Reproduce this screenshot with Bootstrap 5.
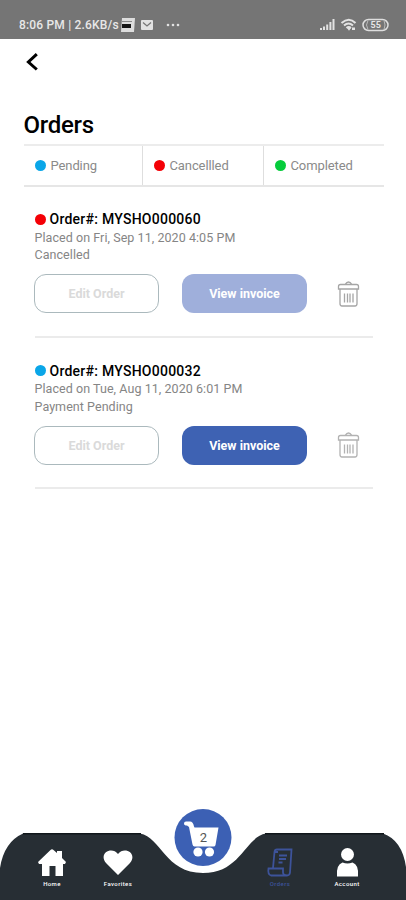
<!DOCTYPE html>
<html lang="en">
<head>
<meta charset="utf-8">
<meta name="viewport" content="width=device-width, initial-scale=1">
<title>Orders</title>
<link href="https://cdn.jsdelivr.net/npm/bootstrap@5.3.0/dist/css/bootstrap.min.css" rel="stylesheet">
<style>
body{font-family:Roboto,"Liberation Sans",sans-serif;background:#fff;color:#000;height:900px;overflow:hidden}
svg{display:block;flex:none}
.status-bar{height:39px;background:#757575;color:#e8e8e8;padding:11px 17px 0 19px;font-size:12px;font-weight:500;line-height:28px}
.status-bar>div{height:28px}
.status-text{width:101px;white-space:nowrap;letter-spacing:.18px}
.back-link{margin:14px 0 0 25px;width:14px}
.page-title{font-size:24px;font-weight:500;line-height:28px;margin:40px 0 5px;letter-spacing:-.3px}
.orders-page{padding:0 22px 0 23.5px}
.filters{border-top:2px solid #ececec;border-bottom:2px solid #e6e6e6;height:43px}
.filters>div{font-size:13px;color:#8a8a8a;padding-left:11px;width:121px;gap:5px;letter-spacing:-.1px}
.filters>div:first-child{width:118px;letter-spacing:-.1px}
.filters>div+div{border-left:1px solid #dedede}
.dot{width:11px;height:11px;border-radius:50%;flex:none}
.blue{background:#0aa6e8}.red{background:#f40006}.green{background:#06cc3c}
.order{margin:0 11px;height:151.5px;border-bottom:2px solid #ebebeb;padding-top:25px}
.filters+.order{height:150.5px;padding-top:24px}
.order-no{font-size:14px;font-weight:500;line-height:16px;gap:4px;letter-spacing:.25px}
.order-info{font-size:12.5px;line-height:17.5px;color:#858585;margin-top:1.5px;letter-spacing:.06px}
.order-actions{margin-top:10.5px;margin-left:-.5px}
.act{width:125px;height:39px;border-radius:12px;font-size:12.5px;font-weight:700;padding:0;line-height:37px}
.btn-edit{border:1px solid #abb9bd;color:#dadada;background:#fff}
.btn-view{background:#3e62b3;color:#fff;margin-left:23px;border:0}
.btn-faded{background:#9fafdb}
.trash{margin:0 0 0 30px}
.tabs{height:94px}
.tab-item{font-size:6px;line-height:8px;color:#fff;letter-spacing:.4px;font-weight:500;padding-top:41px}
.tab-item span{margin-top:3px}
.tab-item.current{color:#3d539a}
.tab-item svg{margin:0 auto}
.cart{left:174px;top:2px}
.cart text{font:13px Roboto,sans-serif}
</style>
</head>
<body class="d-flex flex-column">
<header class="status-bar d-flex justify-content-between">
  <div class="d-flex align-items-center">
    <span class="status-text">8:06 PM | 2.6KB/s</span>
    <svg width="15" height="14" viewBox="0 0 15 14"><path d="M2 0h13l-1 14H1z" fill="#ddd"/><path d="M2 6h9v4H2z" fill="#161616"/><path d="M2 3h10v1H2z" fill="#888"/></svg>
    <svg class="ms-1" width="16" height="14" viewBox="0 0 16 14"><rect x="2" y="2" width="12" height="10" rx="1" fill="#e2e2e2"/><path d="M4 4.500l4 3.500 4-3.500" fill="none" stroke="#777" stroke-width="1.300"/></svg>
    <svg style="margin-left:10px" width="16" height="4" viewBox="0 0 16 4"><g fill="#e2e2e2"><circle cx="3" cy="2" r="1.300"/><circle cx="8" cy="2" r="1.300"/><circle cx="13" cy="2" r="1.300"/></g></svg>
  </div>
  <div class="d-flex align-items-center">
    <svg width="17" height="14" viewBox="0 0 17 14"><path d="M1 10h2v2H1zM4 8.500h2V12H4zM7.200 6.500h2V12h-2zM10.400 4h2v8h-2zM13.500 1h2v11h-2z" fill="#e2e2e2"/></svg>
    <svg class="ms-1" width="18" height="14" viewBox="0 0 18 14"><path d="M1.500 5Q9-1.500 15.500 5M4 7.500q4.500-4 9 0M6.500 10q2.200-2 4.500 0" fill="none" stroke="#e2e2e2" stroke-width="2"/><path d="M7 10h4l-2 2.800zM12 9.500h3V12h-3z" fill="#e2e2e2"/></svg>
    <svg class="ms-1" width="27" height="14" viewBox="0 0 27 14"><rect x="1" y="1.500" width="25" height="11" rx="5.500" fill="none" stroke="#dedede" stroke-width="1.500"/><path d="M6 2.500q-3 4.500 0 9M22 2.500q2 4.500 0 9" fill="none" stroke="#bbb"/><text x="8.500" y="10.300" font-size="9" font-weight="700" fill="#e6e6e6">55</text></svg>
  </div>
</header>
<main class="flex-grow-1">
  <a class="back-link d-block" href="#" aria-label="Back"><svg width="14" height="18" viewBox="0 0 14 18"><path d="M11.800 1.200L3.400 9l8.400 7.500" fill="none" stroke="#000" stroke-width="3"/></svg></a>
  <div class="orders-page">
    <h1 class="page-title">Orders</h1>
    <div class="filters d-flex">
      <div class="d-flex align-items-center"><i class="dot blue"></i>Pending</div>
      <div class="d-flex align-items-center"><i class="dot red"></i>Cancellled</div>
      <div class="d-flex align-items-center"><i class="dot green"></i>Completed</div>
    </div>
    <section class="order">
      <div class="order-no d-flex align-items-center"><i class="dot red"></i>Order#: MYSHO000060</div>
      <div class="order-info">Placed on Fri, Sep 11, 2020 4:05 PM<br>Cancelled</div>
      <div class="order-actions d-flex align-items-center">
        <button class="btn act btn-edit">Edit Order</button>
        <button class="btn act btn-view btn-faded">View invoice</button>
        <svg class="trash" width="23" height="28" viewBox="0 0 23 28"><g fill="none" stroke="#a5a5a5" stroke-width="1.300"><path d="M8 4.500Q11.500-.5 15 4.500M3.500 4.500h16q2 0 2 2V9h-20V6.500q0-2 2-2zM3 9v14.500q0 2.500 2 2.500h13q2 0 2-2.500V9M7.500 13.500v9M10.500 13.500v9M13 13.500v9M16 13.500v9"/></g></svg>
      </div>
    </section>
    <section class="order">
      <div class="order-no d-flex align-items-center"><i class="dot blue"></i>Order#: MYSHO000032</div>
      <div class="order-info">Placed on Tue, Aug 11, 2020 6:01 PM<br>Payment Pending</div>
      <div class="order-actions d-flex align-items-center">
        <button class="btn act btn-edit">Edit Order</button>
        <button class="btn act btn-view">View invoice</button>
        <svg class="trash" width="23" height="28" viewBox="0 0 23 28"><g fill="none" stroke="#b2b2b2" stroke-width="1.300"><path d="M8 4.500Q11.500-.5 15 4.500M3.500 4.500h16q2 0 2 2V9h-20V6.500q0-2 2-2zM3 9v14.500q0 2.500 2 2.500h13q2 0 2-2.500V9M7.500 13.500v9M10.500 13.500v9M13 13.500v9M16 13.500v9"/></g></svg>
      </div>
    </section>
  </div>
</main>
<footer class="tabs position-relative">
  <svg class="position-absolute top-0 start-0" width="406" height="94" viewBox="0 0 406 94"><path d="M0 94V62Q4 36 23 27.500H140C161 31 165 67 203 67S245 31 266 27.500H383Q402 34 406 61V94z" fill="#272e34"/><path d="M23 27.800H141M265 27.800H384" stroke="#11171b" stroke-width="1.500"/></svg>
  <nav class="position-relative d-flex text-center">
    <a class="tab-item text-decoration-none" style="width:66px;margin-left:19px" href="#"><svg width="30" height="30" viewBox="0 0 30 30"><path d="M1 15L13.500 3q1.500-1.500 3 0L20 6V4h5v7l4 4-1 2h-2v12h-7.500V19h-6v10H5V17H2z" fill="#fff"/></svg><span class="d-block">Home</span></a>
    <a class="tab-item text-decoration-none" style="width:66px" href="#"><svg width="30" height="30" viewBox="0 0 30 30"><path d="M15 28L3 16C-5 6 9-1 15 7c6-8 20-1 12 9z" fill="#fff"/></svg><span class="d-block">Favorites</span></a>
    <a class="tab-item current text-decoration-none" style="width:66px;margin-left:96px" href="#"><svg width="28" height="30" viewBox="0 0 28 30"><g fill="none" stroke="#3d539a" stroke-width="1.800"><path d="M7 21L8.500 5q.3-2.500 2.500-2.500h14.500l-1.500 23q-.3 3-3 3M8.500 5H12M2.500 21.500h14.500v4q0 2.500 4 3H5q-3.500-1-2.500-7z"/><path d="M13 8.500h8M13 12h7M12.500 15.500h4"/></g></svg><span class="d-block">Orders</span></a>
    <a class="tab-item text-decoration-none" style="width:68px" href="#"><svg width="26" height="30" viewBox="0 0 26 30"><circle cx="13.500" cy="7.500" r="6.500" fill="#fff"/><path d="M3 29.500q-1-12 5.500-14 5 2 10 0 6.500 2 5.500 14z" fill="#fff"/></svg><span class="d-block">Account</span></a>
  </nav>
  <a class="cart position-absolute" href="#"><svg width="58" height="58" viewBox="0 0 58 58"><circle cx="29" cy="29.500" r="28.500" fill="#3c60b4"/><path d="M10 15.500q0-2 2-2h4q3 0 4 5l.5 1H44.500L41.500 37q-.3 1.500-2 1.500H20.500q-1.500 0-2-2L15 19l-2-1.500q-3 0-3-2z" fill="#fff"/><circle cx="24" cy="44" r="4.600" fill="#fff"/><circle cx="35.500" cy="44" r="4.600" fill="#fff"/><text x="29.500" y="33.500" text-anchor="middle" fill="#555">2</text></svg></a>
</footer>
<script src="https://cdn.jsdelivr.net/npm/bootstrap@5.3.0/dist/js/bootstrap.bundle.min.js"></script>
</body>
</html>
